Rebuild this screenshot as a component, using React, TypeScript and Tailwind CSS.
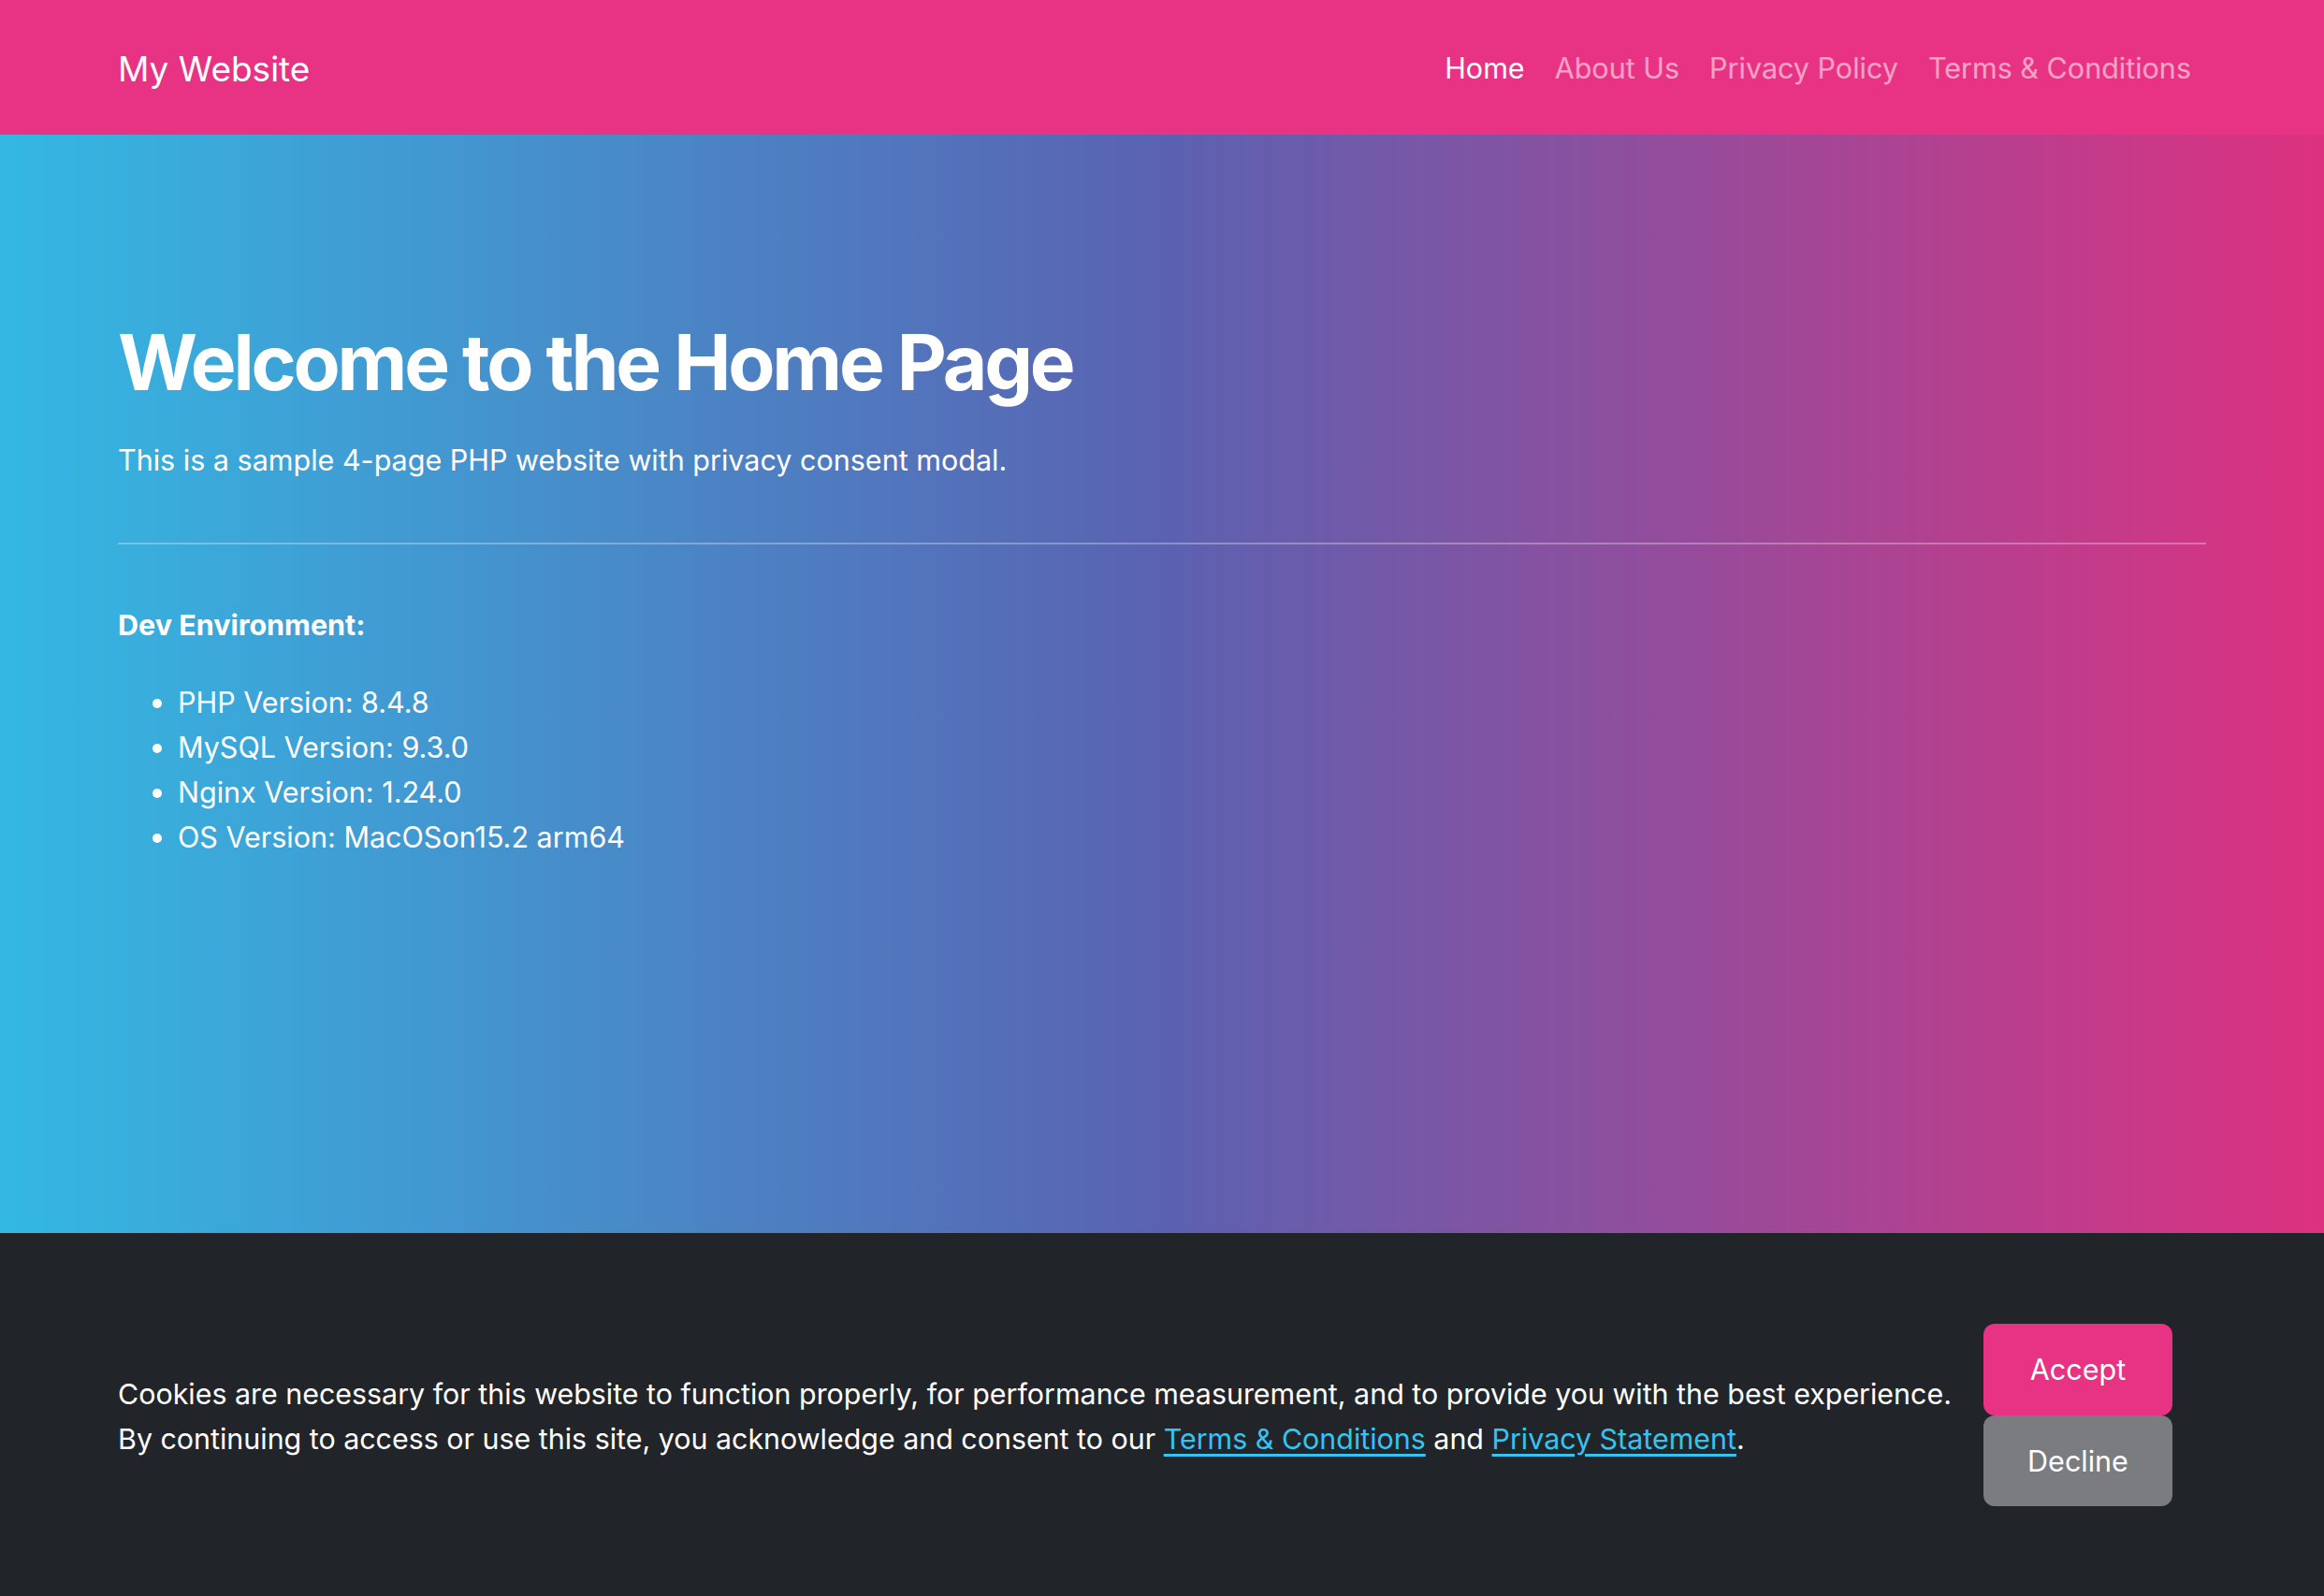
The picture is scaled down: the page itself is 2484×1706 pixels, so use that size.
const navLinks = [
  { label: "Home", active: true },
  { label: "About Us", active: false },
  { label: "Privacy Policy", active: false },
  { label: "Terms & Conditions", active: false },
];

const devEnv = [
  "PHP Version: 8.4.8",
  "MySQL Version: 9.3.0",
  "Nginx Version: 1.24.0",
  "OS Version: MacOSon15.2 arm64",
];

const App = () => {
  return (
    <div className="min-h-[1706px] flex flex-col font-['Inter','Liberation_Sans',sans-serif] text-white">
      {/* navbar */}
      <header className="h-[144px] bg-[#e83283] shrink-0">
        <div className="mx-auto max-w-[2280px] h-full px-[24px] flex items-center justify-between">
          <span className="text-[37px] leading-none pt-[2px]">My Website</span>
          <nav className="flex items-center pt-[2px]">
            {navLinks.map((link) => (
              <a
                key={link.label}
                href="#"
                className={
                  link.active
                    ? "px-[16px] text-[30.5px] text-white"
                    : "px-[16px] text-[30.5px] text-white/55"
                }
              >
                {link.label}
              </a>
            ))}
          </nav>
        </div>
      </header>

      {/* hero */}
      <main className="h-[1174px] shrink-0 bg-[linear-gradient(90deg,#34b8e3_0%,#5a62b1_50%,#dd3180_100%)]">
        <div className="mx-auto max-w-[2280px] px-[24px] pt-[195px]">
          <h1 className="text-[82px] font-bold leading-[1.2] tracking-[-3.2px]">
            Welcome to the Home Page
          </h1>
          <p className="mt-[31px] text-[30.5px] leading-[48px]">
            This is a sample 4-page PHP website with privacy consent modal.
          </p>
          <hr className="mt-[64px] border-0 h-[2px] bg-white/30" />
          <h5 className="mt-[68px] text-[30.5px] font-bold leading-[1.2]">
            Dev Environment:
          </h5>
          <ul className="mt-[40px] list-disc pl-[64px] text-[30.5px] leading-[48px]">
            {devEnv.map((item, i) => (
              <li key={i}>{item}</li>
            ))}
          </ul>
        </div>
      </main>

      {/* cookie consent */}
      <footer className="flex-1 bg-[#212529]">
        <div className="mx-auto max-w-[2280px] px-[24px] pt-[97px] flex items-start">
          <p className="mt-[51px] flex-1 text-[30.4px] leading-[48px]">
            Cookies are necessary for this website to function properly, for performance measurement, and to provide you with the best experience.
            <br />
            By continuing to access or use this site, you acknowledge and consent to our{" "}
            <a href="#" className="text-[#35c4f0] underline underline-offset-[5px] decoration-[3px]">
              Terms &amp; Conditions
            </a>{" "}
            and{" "}
            <a href="#" className="text-[#35c4f0] underline underline-offset-[5px] decoration-[3px]">
              Privacy Statement
            </a>
            .
          </p>
          <div className="flex flex-col w-[202px] mr-[36px] ml-[12px] shrink-0">
            <button className="h-[98px] rounded-[12px] bg-[#e83283] text-[30.5px] text-white">
              Accept
            </button>
            <button className="h-[97px] rounded-[12px] bg-[#7a7c7f] text-[30.5px] text-white">
              Decline
            </button>
          </div>
        </div>
      </footer>
    </div>
  );
};

export default App;
